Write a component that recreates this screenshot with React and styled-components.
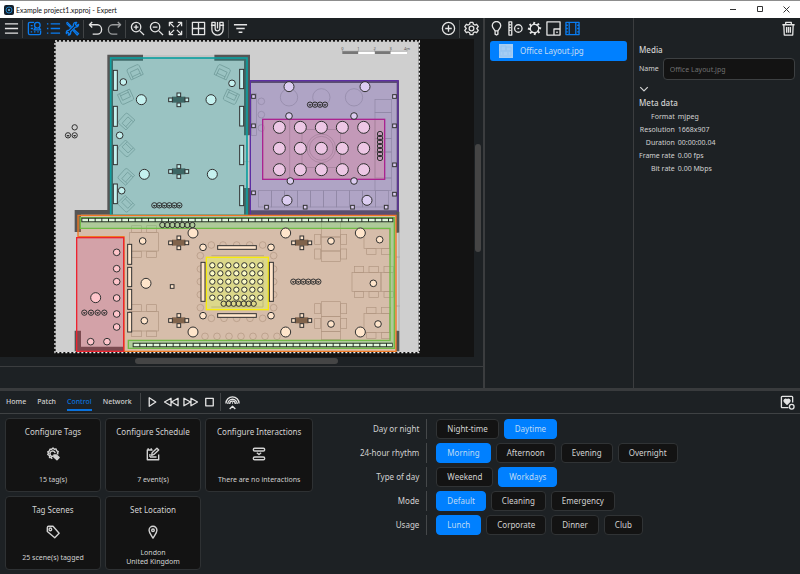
import React, { useState } from 'react';
import styled, { createGlobalStyle } from 'styled-components';

const GlobalStyle = createGlobalStyle`
  * {
    box-sizing: border-box;
  }

  body {
    margin: 0;
    background: #1d2124;
    color: #d2d2d2;
    font-family: "Noto Sans", "Open Sans", sans-serif;
    font-size: 8px;
    line-height: 12px;
  }

  button, input {
    font: inherit;
    color: inherit;
  }

  svg {
    display: block;
    flex: none;
  }
`

const Page = styled.div`
  min-height: 100vh;
  display: flex;
  flex-direction: column;
`

const TitleBar = styled.header`
  display: flex;
  align-items: center;
  gap: 2px;
  height: 18px;
  padding: 0 1px 0 4px;
  border-top: 1px solid #8d8d8d;
  background: #fff;
  color: #111;
  font-family: Lato, "Open Sans", sans-serif;
  font-size: 7px;
`

const WindowTitle = styled.span`
  flex: 1;
`

const WindowButton = styled.button`
  width: 25px;
  height: 16px;
  padding: 0;
  border: 0;
  display: flex;
  align-items: center;
  justify-content: center;
  background: none;
`

const Workspace = styled.main`
  flex: 1;
  display: grid;
  grid-template-columns: minmax(0, 1fr) 149px 166px;
  border-bottom: 3px solid #393b3d;
`

const Stage = styled.section`
  display: flex;
  flex-direction: column;
  border-right: 2px solid #3b3d3f;
`

const Toolbar = styled.div`
  display: flex;
  align-items: center;
  height: 21px;
  padding: 0 2px;
`

const Spacer = styled.div`
  flex: 1;
`

const IconButton = styled.button`
  width: 19px;
  height: 18px;
  padding: 0;
  border: 0;
  display: flex;
  align-items: center;
  justify-content: center;
  background: none;
  color: ${props => props.$active ? '#0a7cf0' : props.$dim ? '#9a9c9d' : '#e4e4e4'};
`

const Separator = styled.div`
  width: 1px;
  height: 18px;
  margin: 0 2px 0 1px;
  background: #414446;
`

const CanvasRow = styled.div`
  flex: 1;
  display: flex;
`

const Canvas = styled.div`
  flex: 1;
  display: flex;
  align-items: center;
  justify-content: center;
  min-width: 0;
  background: #131313;
`

const ScrollY = styled.div`
  width: 9px;
  padding: 105px 2px 0 1px;
`

const ScrollX = styled.div`
  height: 9px;
  padding: 1px 30% 0 28%;
`

const Thumb = styled.div`
  width: 100%;
  height: ${props => props.$vertical ? '108px' : '6px'};
  border-radius: 3px;
  background: #454545;
`

const StatusStrip = styled.div`
  height: 22px;
  border-top: 1px solid #3b3d3f;
`

const MediaColumn = styled.section`
  border-right: 1px solid #3b3d3f;
`

const MediaItem = styled.button`
  display: flex;
  align-items: center;
  gap: 7px;
  width: calc(100% - 11px);
  height: 20px;
  margin: 2px 5px;
  padding: 0 9px;
  border: 0;
  border-radius: 3px;
  background: #0080ff;
  color: #c4dcf4;
`

const Properties = styled.aside`
  display: flex;
  flex-direction: column;
`

const PropertiesBody = styled.div`
  display: flex;
  flex-direction: column;
  align-items: flex-start;
  padding: 5px 5px;
`

const SectionTitle = styled.h2`
  margin: 0;
  font-size: 8px;
  font-weight: 500;
  line-height: 12px;
`

const Field = styled.label`
  display: flex;
  align-items: center;
  gap: 4px;
  width: 100%;
  margin-top: 2px;
  font-size: 7px;
`

const TextInput = styled.input`
  flex: 1;
  min-width: 0;
  height: 22px;
  padding: 0 6px;
  border: 1px solid #3d4042;
  border-radius: 4px;
  background: #131313;
  color: #707070;
`

const Collapse = styled.button`
  margin: 4px 0 3px;
  padding: 0;
  border: 0;
  background: none;
`

const MetaTable = styled.table`
  margin-top: 1px;
  border-spacing: 0;
  font-size: 7px;
  line-height: 13px;

  th {
    padding: 0 3px 0 0;
    font-weight: 400;
    text-align: right;
  }

  td {
    padding: 0;
  }
`

const TabBar = styled.nav`
  display: flex;
  align-items: center;
  height: 23px;
  padding: 0 3px 0 6px;
  border-bottom: 1px solid #3f4244;
`

const Tabs = styled.div`
  display: flex;
  gap: 11px;
  margin-right: 7px;
`

const Tab = styled.button`
  padding: 3px 0 1px;
  border: 0;
  border-bottom: 2px solid ${props => props.$active ? '#0a72dd' : 'transparent'};
  background: none;
  color: ${props => props.$active ? '#0a72dd' : '#d2d2d2'};
  font-size: 7px;
  font-weight: 500;
`

const ControlPanel = styled.section`
  display: flex;
  align-items: flex-start;
  padding: 4px 5px;
`

const Cards = styled.div`
  display: grid;
  grid-template-columns: 96px 96px auto;
  gap: 4px;
`

const Card = styled.button`
  display: flex;
  flex-direction: column;
  align-items: center;
  justify-content: space-between;
  min-height: 74px;
  padding: 7px 11px 3px;
  border: 1px solid #2e3133;
  border-radius: 4px;
  background: #131313;
  white-space: nowrap;
`

const CardNote = styled.span`
  display: flex;
  flex-direction: column;
  justify-content: center;
  font-size: 7px;
  line-height: 9px;
  min-height: 18px;
`

const Scenes = styled.div`
  display: grid;
  grid-template-columns: 114px auto;
  row-gap: 4px;
  padding-top: 1px;
`

const SceneLabel = styled.span`
  padding-right: 7px;
  border-right: 1px solid #45484a;
  line-height: 20px;
  text-align: right;
`

const SceneButtons = styled.div`
  display: flex;
  gap: 5px;
  padding-left: 9px;
`

const SceneButton = styled.button`
  height: 20px;
  padding: 0 10px;
  border: 1px solid ${props => props.$active ? '#0080ff' : '#303335'};
  border-radius: 4px;
  background: ${props => props.$active ? '#0080ff' : '#131313'};
  color: ${props => props.$active ? '#bedaf5' : '#d2d2d2'};
`

const ICONS = {
  menu: <path d="M1 3h14M1 8h14M1 13h14" />,
  fixtures: (
    <>
      <path d="M7.500 1.500H3Q1.500 1.500 1.500 3v10q0 1.500 1.500 1.500h10q1.500 0 1.500-1.500v-2.500M4 8h2.500M4 11.500h1.500M7.500 11.500H9M11 11.500h1.500M4 5h2" />
      <circle cx="11" cy="4.500" r="3" />
      <path d="M9 7 7.500 9.500h7L13 7" />
    </>
  ),
  list: <path d="M5 3h10M5 8h10M5 13h10M1 3h1.500M1 8h1.500M1 13h1.500" />,
  tools: (
    <>
      <path d="M1.500 2.500l1-1 4.500 4.500M1.500 2.500 6 7M9.500 9l5 4.500-1.500 1.500-4.500-5" />
      <path d="M14.500 3.500 12.500 5 11 3.500l1.500-2C10 1 8.500 3 9 5l-5 5c-2-.500-3 1.500-2.500 3.500L3 12l1.500 1.500-1 1.500c2 0 3-1.500 2.500-3.500l5-5c2 .500 3.500-1 3.500-3z" />
    </>
  ),
  undo: <path d="M4.500 1 1.500 4l3 3M1.500 4H10a4.500 5 0 0 1 0 10H5" />,
  redo: <path d="M11.500 1l3 3-3 3M14.500 4H6a4.500 5 0 0 0 0 10h5" />,
  zoomIn: <><circle cx="6.500" cy="6.500" r="5" /><path d="M10.500 10.500 15 15M4 6.500h5M6.500 4v5" /></>,
  zoomOut: <><circle cx="6.500" cy="6.500" r="5" /><path d="M10.500 10.500 15 15M4 6.500h5" /></>,
  expand: <path d="M1.500 5.500v-4h4M10.500 1.500h4v4M14.500 10.500v4h-4M5.500 14.500h-4v-4M2 2l4.500 4.500M14 2 9.500 6.500M14 14 9.500 9.500M2 14l4.500-4.500" />,
  grid: <path d="M1.500 1.500h13v13h-13zM8 1.500v13M1.500 8h13" />,
  magnet: <path d="M1 4.500h5M10 4.500h5M2 1.500h3.500V8a2.500 2.500 0 0 0 5 0V1.500H14V9A6 6 0 0 1 2 9zM8 1v7" />,
  filter: <path d="M1 4h14M3.500 8h9M6 12h4" />,
  add: <><circle cx="8" cy="8" r="6.500" /><path d="M4.500 8h7M8 4.500v7" /></>,
  gear: (
    <>
      <circle cx="8" cy="8" r="2.500" />
      <path d="M6.500 1.500h3l.5 2 1.500.8 2-.8 1.700 2.500L13.600 8l1.600 2-1.700 2.500-2-.8-1.500.8-.5 2h-3l-.5-2-1.500-.8-2 .8L.800 10 2.400 8 .800 6l1.700-2.500 2 .8L6 3.500z" />
    </>
  ),
  bulb: <path d="M6.500 10.500C5.500 8.500 3.500 7.500 3.500 5a4.500 4.500 0 0 1 9 0c0 2.500-2 3.500-3 5.500zM6.500 10.500V14l1.500 1 1.500-1v-3.500" />,
  sensor: <><path d="M1 1h3v14H1zM1 4h2M1 7h2M1 10h2" /><circle cx="11" cy="8" r="4" /><path d="M10 8h2" /></>,
  sun: (
    <>
      <circle cx="8" cy="8" r="4.500" />
      <path d="M8 1 7 4M13 3l-3 1.500M15 8l-3-1M13 13l-1.500-3M8 15l1-3M3 13l3-1.500M1 8l3 1M3 3l1.500 3" strokeWidth="2" />
    </>
  ),
  layout: <path d="M1 1h14v14H1zM8.500 15V8.500H15M11 12h1.500" />,
  film: <path d="M1 1.500h14v13H1zM4.500 1.500v13M11.500 1.500v13M1 4.500h2M1 8h2M1 11.500h2M13 4.500h2M13 8h2M13 11.500h2" />,
  trash: <path d="M1.500 4h13M5 4V1.500h6V4M3 4l.5 11h9L13 4M6 6.500v6M8 6.500v6M10 6.500v6" />,
  play: <path d="M4.500 3v9l7-4.500z" />,
  rewind: <path d="M7.500 3.500v8l-7-4zM15 3.500v8l-7-4z" />,
  forward: <path d="M1 3.500v8l7-4zM8.500 3.500v8l7-4z" />,
  stop: <path d="M4 3.500h8v8H4z" />,
  broadcast: <path d="M1 9a7 7 0 0 1 14 0M3 9.500a5 5 0 0 1 10 0M5 9.500a3 3 0 0 1 6 0M7.500 8.500h1M5 15l3-3 3 3" />,
  health: (
    <>
      <path d="M9 13.500H2.500q-1 0-1-1v-10q0-1 1-1h10q1 0 1 1V8" />
      <path d="M7.500 10 4.500 7c-1-2 1.500-3.500 3-1.500 1.500-2 4-.500 3 1.500z" fill="currentColor" />
      <circle cx="12.500" cy="12.500" r="2.500" />
    </>
  ),
  tagSettings: (
    <>
      <path d="M7 13.500 6 12H4V10L2 8.500 3 7 2 5.500 4 4.500 4.500 2.500h2L8 1l1.500 1.500 2-.300.500 2 2 1L13 7l1 1.500M8.500 10.500A3 3 0 1 1 10.500 7" />
      <path d="M9 9h3l3 3-2.500 2.500L9 11.500z" fill="currentColor" />
    </>
  ),
  schedule: <path d="M7.500 3.500h-6v11h13V8.500M2.500 1.500v2M6 1.500v2M6.500 9.500l.5-3 5.500-5 2 2-5.500 5zM4.500 11.500h7.500M4.500 8v3.500" />,
  interactions: <path d="M3 1.500h10q1.500 0 1.500 1.500T13 4.500H3Q1.500 4.500 1.500 3T3 1.500zM3 11.500h10q1.500 0 1.500 1.500T13 14.500H3q-1.500 0-1.500-1.500T3 11.500zM5.500 6.500 8 8.500 10.500 6.500" />,
  tag: <><path d="M1.500 3q0-1.500 1.500-1.500h5l7 8-5 5-8.500-7z" /><circle cx="5" cy="5" r="1.500" /></>,
  pin: <><path d="M8 15C6 11.500 3.500 9 3.500 6a4.500 4.500 0 0 1 9 0c0 3-2.500 5.500-4.500 9z" /><circle cx="8" cy="6" r="1.500" /></>,
  chevron: <path d="M2 5l6 6 6-6" />,
}

function Icon({ name, size = 15, weight = 1.4 }) {
  return (
    <svg
      width={size}
      height={size}
      viewBox="0 0 16 16"
      fill="none"
      stroke="currentColor"
      strokeWidth={weight}
      strokeLinejoin="round"
      aria-hidden="true"
    >
      {ICONS[name]}
    </svg>
  )
}

const INK = '#303030'

function Dots({ at, r, fill = 'none', stroke = INK, width = 3 }) {
  return at.map(([x, y], i) => (
    <circle key={i} cx={x} cy={y} r={r} fill={fill} stroke={stroke} strokeWidth={width} />
  ))
}

function Boxes({ at, fill = 'none', stroke = INK, width = 3 }) {
  return at.map(([x, y, w, h], i) => (
    <rect key={i} x={x} y={y} width={w} height={h} fill={fill} stroke={stroke} strokeWidth={width} />
  ))
}

// a row of small downlights that touch each other
function Chain({ x, y, count, step = 15, vertical = false, solid = false }) {
  return Array.from({ length: count }, (_, i) => {
    const cx = vertical ? x : x + i * step
    const cy = vertical ? y + i * step : y
    return (
      <g key={i}>
        <circle cx={cx} cy={cy} r="8" fill="none" stroke={INK} strokeWidth="3" />
        {solid && <path d={`M${cx - 5} ${cy - 1}h10l-5 6z`} fill={INK} />}
      </g>
    )
  })
}

function Spot({ x, y, body, fill }) {
  return (
    <g transform={`translate(${x} ${y})`}>
      <rect x="-20" y="-9" width="40" height="18" fill={body} />
      <Boxes
        at={[[-30, -5, 11, 11], [19, -5, 11, 11], [-5, -20, 11, 11], [-5, 10, 11, 11]]}
        fill={fill}
      />
    </g>
  )
}

function Armchair({ x, y, angle }) {
  return (
    <g transform={`translate(${x} ${y}) rotate(${angle})`} fill="none" stroke="#6c9796" strokeWidth="2">
      <path d="M-20 18v-28q0-6 6-6h28q6 0 6 6v28zM-13 18v-22h26v22M-13 11h26" />
    </g>
  )
}

const grid = (xs, ys) => ys.flatMap(y => xs.map(x => [x, y]))
const steps = (start, step, count) => Array.from({ length: count }, (_, i) => start + i * step)

function TealRoom() {
  const light = '#c5f1ef'
  return (
    <g transform="translate(150 114)">
      <path d="M172 50h107v18h-90v462H93v52H74v-66h98zM493 50h107v242h-18V68h-89zM582 450h18v82h-18z" fill="#555" />
      <path d="M279 54h214M598 292v158M582 371h18" stroke="#aaa" strokeWidth="2" />
      <rect x="182" y="60" width="409" height="472" fill="#0ba3a0" fillOpacity=".27" stroke="#0f9f9f" strokeWidth="5" />
      <Armchair x={254} y={101} angle={-25} />
      <Armchair x={228} y={178} angle={155} />
      <Armchair x={228} y={249} angle={-48} />
      <Armchair x={228} y={333} angle={225} />
      <Armchair x={227} y={415} angle={-48} />
      <Armchair x={227} y={499} angle={225} />
      <Armchair x={518} y={101} angle={25} />
      <Armchair x={543} y={178} angle={205} />
      <Boxes
        at={[[190, 97, 12, 60], [190, 205, 12, 60], [190, 322, 12, 58], [190, 438, 12, 59],
          [569, 94, 12, 58], [569, 205, 12, 59], [569, 322, 12, 58], [569, 443, 12, 60]]}
        fill={light}
      />
      <Dots at={[[274, 185], [483, 185], [283, 409], [487, 409]]} r={15} fill={light} />
      <Dots at={[[220, 132], [546, 136], [209, 292], [215, 458]]} r={10} fill={light} />
      <Spot x={386} y={185} body="#3c6664" fill={light} />
      <Spot x={386} y={400} body="#3c6664" fill={light} />
      <Chain x={313} y={502} count={6} solid />
      <Chain x={74} y={268} count={1} />
      <Chain x={54} y={292} count={2} step={20} solid />
    </g>
  )
}

function PurpleRoom() {
  const light = '#dccdf1'
  const line = '#8f86a4'
  return (
    <g transform="translate(690 114)">
      <path d="M59 127h447v8H59zM500 127h7v404h-7zM59 517h447v15H59z" fill="#555" />
      <rect x="61" y="128" width="443" height="404" fill="#6842b0" fillOpacity=".3" stroke="#5d2ea3" strokeWidth="4" />
      <Dots at={[[177, 178], [274, 178], [372, 178]]} r={26} stroke={line} width={2} />
      <Dots at={[[94, 190], [94, 230], [94, 270]]} r={10} stroke={line} width={2} />
      <Boxes
        at={[[64, 167, 15, 125], [435, 184, 49, 40], [435, 224, 49, 78], [435, 302, 49, 40], [435, 342, 49, 78], [435, 420, 49, 38],
          ...steps(85, 39, 10).map(x => [x, 458, 39, 49])]}
        stroke={line}
        width={2}
      />
      <rect x="98" y="244" width="366" height="180" fill="#df8ba6" fillOpacity=".42" stroke="#aa2490" strokeWidth="4" />
      <g stroke="#a17f99" strokeWidth="2" fill="none">
        <rect x="216" y="274" width="116" height="115" />
        <circle cx="274" cy="331" r="43" />
        <circle cx="274" cy="331" r="36" />
        <path d="M179 246v176M435 246v176M435 302h28M435 342h28" />
      </g>
      <Dots at={grid([148, 211, 274, 337, 401], [268, 331, 395])} r={18} fill="#edc7e5" />
      <Dots at={[[177, 146], [405, 146], [171, 487], [411, 487]]} r={15} fill={light} />
      <Dots at={[[177, 234], [372, 234], [181, 429], [372, 429]]} r={10} fill={light} />
      <Boxes
        at={[[70, 175], [493, 175], [70, 263], [493, 263], [493, 380], [70, 464], [493, 468],
          [109, 507], [225, 507], [367, 507], [468, 507]].map(([x, y]) => [x - 5, y - 5, 11, 11])}
        fill={light}
      />
      <Chain x={240} y={200} count={4} solid />
      <Chain x={450} y={288} count={7} step={12} vertical />
      <path d="M337 36v4h194v-4M385 36v4M434 36v4M482 36v4" fill="none" stroke="#999" strokeWidth="2" />
      <path d="M337 40h48v8h-48zM434 40h48v8h-48z" fill="#777" />
      <path d="M385 41h49v7h-49zM482 41h49v7h-49z" fill="#fff" />
      <g fill="#555" fontSize="12" textAnchor="middle">
        <text x="337" y="36">0</text>
        <text x="385" y="36">1</text>
        <text x="434" y="36">2</text>
        <text x="482" y="36">3</text>
        <text x="531" y="36">4m</text>
      </g>
    </g>
  )
}

function OpenOffice() {
  const light = '#ffe5cb'
  const line = '#b09580'
  return (
    <g transform="translate(150 615)">
      <path d="M74 377h19v48h128v14H74zM1038 20h10v63h-10zM1038 377h10v62h-10z" fill="#555" />
      <path d="M1047 83v294M1038 156h12M1038 303h12" stroke="#aaa" strokeWidth="3" />
      <path d="M84 31h954v408H222V95H84z" fill="#e88b48" fillOpacity=".27" stroke="#ee7722" strokeWidth="4" />
      <Boxes
        at={[[238, 83, 87, 55], [245, 62, 29, 20], [290, 62, 29, 20], [245, 139, 29, 18], [290, 139, 29, 18],
          [238, 319, 87, 59], [245, 299, 29, 20], [290, 299, 29, 20], [245, 378, 29, 17], [290, 378, 29, 17],
          [814, 50, 57, 46], [814, 96, 57, 42], [814, 138, 57, 31], [794, 88, 18, 30], [872, 88, 18, 30], [794, 132, 18, 30], [872, 132, 18, 30],
          [814, 290, 57, 44], [814, 334, 57, 46], [814, 380, 57, 24], [794, 296, 18, 30], [872, 296, 18, 30], [794, 340, 18, 30], [872, 340, 18, 30],
          [942, 72, 76, 58], [950, 131, 28, 17], [994, 131, 28, 17],
          [906, 202, 87, 57], [993, 202, 36, 57], [913, 184, 28, 18], [957, 184, 28, 18], [1002, 184, 28, 18], [913, 260, 28, 17], [957, 260, 28, 17], [1002, 260, 28, 17],
          [942, 325, 76, 57], [950, 307, 28, 18], [994, 307, 28, 18], [950, 382, 28, 18], [994, 382, 28, 18]]}
        stroke={line}
        width={2}
      />
      <Dots
        at={[[484, 120], [519, 120], [560, 120], [599, 120], [638, 120], [451, 152], [451, 192], [451, 230], [451, 269], [451, 308],
          [671, 152], [671, 192], [671, 230], [671, 269], [671, 308], [484, 340], [522, 340], [560, 340], [600, 340], [638, 340],
          ...steps(465, 36, 7).map(x => [x, 394])]}
        r={10}
        stroke={line}
        width={2}
      />
      <path d="M484 152h158" stroke={line} strokeWidth="2" />
      <path
        d="M91 38h942v392H235v-24h785V70H91z"
        fill="#6fe080"
        fillOpacity=".38"
        stroke="#6fba45"
        strokeWidth="4"
      />
      <path d="M94 45h936M248 420h780" stroke="#263326" strokeWidth="14" />
      <path d="M97 45h930M251 420h775" stroke="#e0f7dc" strokeWidth="8" strokeDasharray="17 3" />
      <Chain x={337} y={60} count={7} />

      <rect x="80" y="98" width="141" height="341" fill="#e02e45" fillOpacity=".28" stroke="#ec2430" strokeWidth="4" />
      <Dots
        at={[[200, 142], [200, 191], [200, 230], [200, 279], [200, 327], [200, 366], [122, 410], [171, 410]]}
        r={10}
        fill="#ffc5cb"
      />
      <Dots at={[[137, 278]]} r={15} fill="#ffc5cb" />
      <Chain x={103} y={323} count={4} step={20} solid />

      <rect x="469" y="157" width="186" height="157" fill="#e0e975" fillOpacity=".6" stroke="#f7ea0a" strokeWidth="4" />
      <path d="M484 306h155v-140" fill="none" stroke="#b1aa74" strokeWidth="2" />
      <Dots at={grid(steps(487, 24, 7), [181, 205, 230, 254, 278])} r={8} fill="#fbfac5" />
      <Chain x={521} y={296} count={7} />

      <Boxes
        at={[[233, 118, 12, 60], [233, 187, 12, 58], [233, 253, 12, 60], [233, 322, 12, 59],
          [453, 172, 12, 117], [658, 172, 12, 117], [503, 122, 116, 11], [503, 326, 116, 11], [361, 239, 11, 11]]}
        fill={light}
      />
      <Dots at={[[429, 84], [429, 381], [288, 235], [707, 84], [931, 84], [707, 381], [931, 381]]} r={15} fill={light} />
      <Dots
        at={[[278, 108], [283, 347], [459, 127], [459, 332], [663, 127], [663, 332], [843, 108], [989, 104], [970, 235], [843, 357], [984, 357]]}
        r={10}
        fill={light}
      />
      {grid([386, 755], [113, 346]).map(([x, y]) => (
        <Spot key={`${x}-${y}`} x={x} y={y} body="#80634b" fill={light} />
      ))}
      <Chain x={730} y={230} count={6} solid />
    </g>
  )
}

function FloorPlan() {
  return (
    <svg width="366" height="316" viewBox="162 120 1098 948" role="img" aria-label="Office layout">
      <rect x="165" y="123" width="1093" height="935" fill="#cfcfcf" />
      <TealRoom />
      <PurpleRoom />
      <OpenOffice />
      <rect x="165" y="123" width="1093" height="935" fill="none" stroke="#111" strokeWidth="4" />
      <rect x="165" y="123" width="1093" height="935" fill="none" stroke="#eee" strokeWidth="4" strokeDasharray="6 6" />
    </svg>
  )
}

const TOOL_GROUPS = [
  [['menu', 'Menu']],
  [['fixtures', 'Fixtures', 'active'], ['list', 'List', 'active'], ['tools', 'Tools', 'active']],
  [['undo', 'Undo'], ['redo', 'Redo', 'dim']],
  [['zoomIn', 'Zoom in'], ['zoomOut', 'Zoom out'], ['expand', 'Zoom to fit']],
  [['grid', 'Grid'], ['magnet', 'Snap']],
  [['filter', 'Filter']],
]

const META = [
  ['Format', 'mjpeg'],
  ['Resolution', '1668x907'],
  ['Duration', '00:00:00.04'],
  ['Frame rate', '0.00 fps'],
  ['Bit rate', '0.00 Mbps'],
]

const CARDS = [
  { title: 'Configure Tags', icon: 'tagSettings', notes: ['15 tag(s)'] },
  { title: 'Configure Schedule', icon: 'schedule', notes: ['7 event(s)'] },
  { title: 'Configure Interactions', icon: 'interactions', notes: ['There are no interactions'] },
  { title: 'Tag Scenes', icon: 'tag', notes: ['25 scene(s) tagged'] },
  { title: 'Set Location', icon: 'pin', notes: ['London', 'United Kingdom'] },
]

const SCENES = [
  { label: 'Day or night', options: ['Night-time', 'Daytime'] },
  { label: '24-hour rhythm', options: ['Morning', 'Afternoon', 'Evening', 'Overnight'] },
  { label: 'Type of day', options: ['Weekend', 'Workdays'] },
  { label: 'Mode', options: ['Default', 'Cleaning', 'Emergency'] },
  { label: 'Usage', options: ['Lunch', 'Corporate', 'Dinner', 'Club'] },
]

function Tool({ icon, label, state, size }) {
  return (
    <IconButton aria-label={label} $active={state === 'active'} $dim={state === 'dim'}>
      <Icon name={icon} size={size} />
    </IconButton>
  )
}

function WindowHeader() {
  return (
    <TitleBar>
      <svg width="10" height="10" viewBox="0 0 10 10" aria-hidden="true">
        <rect width="10" height="10" rx="2" fill="#16202b" />
        <circle cx="5" cy="5" r="3" fill="none" stroke="#1b7fc4" />
        <circle cx="5" cy="5" r="1" fill="#7cc7f5" />
      </svg>
      <WindowTitle>Example project1.xpproj - Expert</WindowTitle>
      <WindowButton aria-label="Minimize">
        <svg width="7" height="7" stroke="#333"><path d="M1 3.500h6" /></svg>
      </WindowButton>
      <WindowButton aria-label="Maximize">
        <svg width="7" height="7" stroke="#333" fill="none"><path d="M1.500.500h5v5h-5z" /></svg>
      </WindowButton>
      <WindowButton aria-label="Close">
        <svg width="7" height="7" stroke="#333"><path d="M.500.500l6 6M6.500.500l-6 6" /></svg>
      </WindowButton>
    </TitleBar>
  )
}

function StageView() {
  return (
    <Stage>
      <Toolbar>
        {TOOL_GROUPS.map((group, i) => (
          <React.Fragment key={i}>
            {i > 0 && <Separator />}
            {group.map(([icon, label, state]) => (
              <Tool key={icon} icon={icon} label={label} state={state} />
            ))}
          </React.Fragment>
        ))}
        <Spacer />
        <Tool icon="add" label="Add" />
        <Separator />
        <Tool icon="gear" label="Settings" />
      </Toolbar>
      <CanvasRow>
        <Canvas>
          <FloorPlan />
        </Canvas>
        <ScrollY><Thumb $vertical /></ScrollY>
      </CanvasRow>
      <ScrollX><Thumb /></ScrollX>
      <StatusStrip />
    </Stage>
  )
}

function MediaPanel() {
  return (
    <MediaColumn>
      <Toolbar>
        <Tool icon="bulb" label="Fixtures" />
        <Tool icon="sensor" label="Devices" />
        <Tool icon="sun" label="Effects" />
        <Tool icon="layout" label="Areas" />
        <Tool icon="film" label="Media" state="active" />
      </Toolbar>
      <MediaItem>
        <svg width="14" height="14" viewBox="0 0 14 14" aria-hidden="true">
          <rect width="14" height="14" fill="#a5cdf4" />
          <path d="M2 2h5v5H2zM7 3h5v4H7zM1 7h11v5H1zM4 8v3M9 8v3" fill="none" stroke="#94c3f1" />
        </svg>
        Office Layout.jpg
      </MediaItem>
    </MediaColumn>
  )
}

function PropertiesPanel() {
  const [name, setName] = useState('Office Layout.jpg')
  const [open, setOpen] = useState(true)

  return (
    <Properties>
      <Toolbar>
        <Spacer />
        <Tool icon="trash" label="Delete" />
      </Toolbar>
      <PropertiesBody>
        <SectionTitle>Media</SectionTitle>
        <Field>
          Name
          <TextInput value={name} onChange={e => setName(e.target.value)} />
        </Field>
        <Collapse aria-label="Toggle meta data" onClick={() => setOpen(!open)}>
          <Icon name="chevron" size={10} weight={2} />
        </Collapse>
        {open && (
          <>
            <SectionTitle>Meta data</SectionTitle>
            <MetaTable>
              <tbody>
                {META.map(([key, value]) => (
                  <tr key={key}>
                    <th scope="row">{key}</th>
                    <td>{value}</td>
                  </tr>
                ))}
              </tbody>
            </MetaTable>
          </>
        )}
      </PropertiesBody>
    </Properties>
  )
}

function Navigation() {
  const [tab, setTab] = useState('Control')

  return (
    <TabBar>
      <Tabs>
        {['Home', 'Patch', 'Control', 'Network'].map(name => (
          <Tab key={name} $active={tab === name} onClick={() => setTab(name)}>{name}</Tab>
        ))}
      </Tabs>
      <Separator />
      <Tool icon="play" label="Play" />
      <Tool icon="rewind" label="Rewind" />
      <Tool icon="forward" label="Forward" />
      <Tool icon="stop" label="Stop" />
      <Separator />
      <Tool icon="broadcast" label="Broadcast" />
      <Spacer />
      <Tool icon="health" label="Status" />
    </TabBar>
  )
}

function Controls() {
  const [active, setActive] = useState({
    'Day or night': 'Daytime',
    '24-hour rhythm': 'Morning',
    'Type of day': 'Workdays',
    'Mode': 'Default',
    'Usage': 'Lunch',
  })

  return (
    <ControlPanel>
      <Cards>
        {CARDS.map(({ title, icon, notes }) => (
          <Card key={title}>
            <span>{title}</span>
            <Icon name={icon} size={14} weight={1.6} />
            <CardNote>
              {notes.map(note => <span key={note}>{note}</span>)}
            </CardNote>
          </Card>
        ))}
      </Cards>
      <Scenes>
        {SCENES.map(({ label, options }) => (
          <React.Fragment key={label}>
            <SceneLabel>{label}</SceneLabel>
            <SceneButtons role="group" aria-label={label}>
              {options.map(option => (
                <SceneButton
                  key={option}
                  $active={active[label] === option}
                  aria-pressed={active[label] === option}
                  onClick={() => setActive({ ...active, [label]: option })}
                >
                  {option}
                </SceneButton>
              ))}
            </SceneButtons>
          </React.Fragment>
        ))}
      </Scenes>
    </ControlPanel>
  )
}

function App() {
  return (
    <Page>
      <GlobalStyle />
      <WindowHeader />
      <Workspace>
        <StageView />
        <MediaPanel />
        <PropertiesPanel />
      </Workspace>
      <Navigation />
      <Controls />
    </Page>
  )
}

export default App;
